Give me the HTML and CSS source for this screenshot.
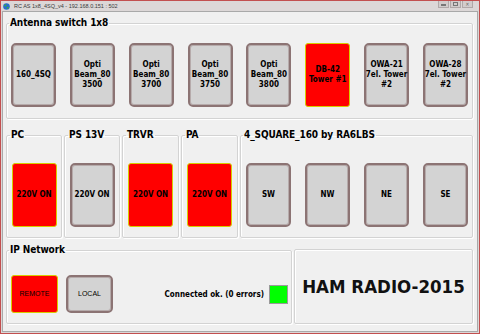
FILE: index.html
```html
<!DOCTYPE html>
<html>
<head>
<meta charset="utf-8">
<link rel="stylesheet" href="styles.css">
</head>
<body>
<div class="window">
  <div class="titlebar">
    <svg class="appicon" width="7" height="7" viewBox="0 0 7 7"><circle cx="3.5" cy="3.5" r="3.3" fill="#2a6fc9"/><path d="M1.2 2.2 Q2.5 1 3.6 2 Q3 3.2 2 3.6 Q1.4 3 1.2 2.2Z M3.8 4 Q5 3.5 5.8 4.4 Q5 6 3.9 5.8Z" fill="#3cae3c"/></svg>
    <span class="title">RC AS 1x8_4SQ_v4 - 192.168.0.151 : 502</span>
    <div class="controls">
      <span class="ctl"><i class="min"></i></span>
      <span class="ctl"><i class="max"></i></span>
      <span class="ctl ctl-close">✕</span>
    </div>
  </div>
  <div class="client">
    <fieldset class="group antenna">
      <legend>Antenna switch 1x8</legend>
      <div class="btn">160_4SQ</div>
      <div class="btn">Opti<br>Beam_80<br>3500</div>
      <div class="btn">Opti<br>Beam_80<br>3700</div>
      <div class="btn">Opti<br>Beam_80<br>3750</div>
      <div class="btn">Opti<br>Beam_80<br>3800</div>
      <div class="btn on">DB-42<br>Tower #1</div>
      <div class="btn">OWA-21<br>7el. Tower<br>#2</div>
      <div class="btn">OWA-28<br>7el. Tower<br>#2</div>
    </fieldset>
    <div class="row2">
      <fieldset class="group power w56"><legend>PC</legend><div class="btn on">220V ON</div></fieldset>
      <fieldset class="group power w56"><legend>PS 13V</legend><div class="btn">220V ON</div></fieldset>
      <fieldset class="group power w57"><legend>TRVR</legend><div class="btn on">220V ON</div></fieldset>
      <fieldset class="group power w57"><legend>PA</legend><div class="btn on">220V ON</div></fieldset>
      <fieldset class="group square">
        <legend>4_SQUARE_160 by RA6LBS</legend>
        <div class="btn">SW</div>
        <div class="btn">NW</div>
        <div class="btn">NE</div>
        <div class="btn">SE</div>
      </fieldset>
    </div>
    <div class="row3">
      <fieldset class="group network">
        <legend>IP Network</legend>
        <div class="btn small on">REMOTE</div>
        <div class="btn small">LOCAL</div>
        <span class="status">Connected ok. (0 errors)</span>
        <span class="led"></span>
      </fieldset>
      <div class="group hambox">HAM RADIO-2015</div>
    </div>
  </div>
</div>
</body>
</html>
```
FILE: styles.css
```css
* { box-sizing: border-box; margin: 0; padding: 0; }
body {
  width: 480px; height: 334px; overflow: hidden;
  font-family: "DejaVu Sans Condensed", "DejaVu Sans", sans-serif;
  font-stretch: condensed;
  background: #d9d3d3;
}
.window {
  width: 480px; height: 334px;
  border: 1px solid #c24f4f;
  background: #dcd7d7;
  padding: 0 1px 1px;
  display: flex; flex-direction: column;
}
.titlebar {
  height: 10px;
  display: flex; align-items: center;
  padding-left: 1px;
}
.appicon { display: block; margin-right: 4px; }
.title {
  font-family: "Liberation Sans", sans-serif;
  font-stretch: normal;
  font-size: 5.5px; color: #3a3a3a;
  line-height: 8px;
}
.controls { margin-left: auto; margin-right: 5px; display: flex; gap: 1px; align-self: flex-start; }
.ctl {
  width: 11px; height: 7px;
  background: #d2cccc; border: 1px solid #b0a8a8; border-top: 0;
  display: flex; align-items: center; justify-content: center;
  font-size: 5px; color: #666; font-family: "DejaVu Sans", sans-serif;
}
.ctl .min { display: block; width: 5px; height: 2px; background: #777; margin-top: 2px; }
.ctl .max { display: block; width: 5px; height: 4px; border: 1px solid #777; }
.client {
  flex: 1;
  background: #f0f0f0;
  border: 1px solid #a9a9a9;
  padding: 5px 4px 0 3px;
  display: flex; flex-direction: column;
}
.group {
  border: 1px solid #d3d3d3;
  border-radius: 2px;
  box-shadow: inset 1px 1px 0 #fff, 1px 1px 0 #fff;
  min-width: 0;
}
legend {
  font-weight: bold; font-size: 10px; line-height: 12px;
  padding: 0 1px; margin-left: -2px; color: #000;
  letter-spacing: -0.1px;
}
.antenna {
  display: flex; justify-content: space-between;
  padding: 14px 4px 11px 4px;
}
.btn {
  width: 45px; height: 64px;
  flex: none;
  background: #d3d3d3;
  border: 2px solid #8c7474;
  border-radius: 5px;
  box-shadow: inset 0 0 0 1px #b6abab;
  display: flex; align-items: center; justify-content: center;
  text-align: center;
  white-space: nowrap;
  font-weight: bold; font-size: 8px; line-height: 10px;
  color: #000;
}
.btn.on {
  background: #ff0000;
  border: 1px solid #d8cc00;
  border-radius: 3px;
  box-shadow: none;
}
.row2 { display: flex; gap: 2px; margin-top: 10px; }
.power { display: flex; justify-content: center; padding: 22px 0 10px; }
.power legend { margin-left: 3px; }
.w56 { width: 56px; }
.w57 { width: 57px; }
.square {
  flex: 1;
  display: flex; justify-content: space-between;
  padding: 22px 4px 10px 5px;
}
.square legend { margin-left: -3px; }
.row3 { display: flex; gap: 2px; margin-top: 6px; align-items: flex-end; }
.network {
  width: 286px;
  display: flex; align-items: center;
  padding: 19px 3px 10px 4px;
}
.btn.small {
  width: 47px; height: 38px;
  font-family: "Liberation Sans", sans-serif;
  font-stretch: normal;
  font-weight: normal; font-size: 7px;
}
.btn.small + .btn.small { margin-left: 8px; }
.status {
  margin-left: auto;
  font-weight: bold; font-size: 8px;
  margin-right: 5px;
}
.led {
  width: 19px; height: 19px;
  background: #00ff00;
  border: 1px solid #9a9a9a;
}
.hambox {
  flex: 1; height: 75px;
  display: flex; align-items: center; justify-content: center;
  font-weight: bold; font-size: 18.5px;
  color: #111;
  padding-left: 0;
}
```
